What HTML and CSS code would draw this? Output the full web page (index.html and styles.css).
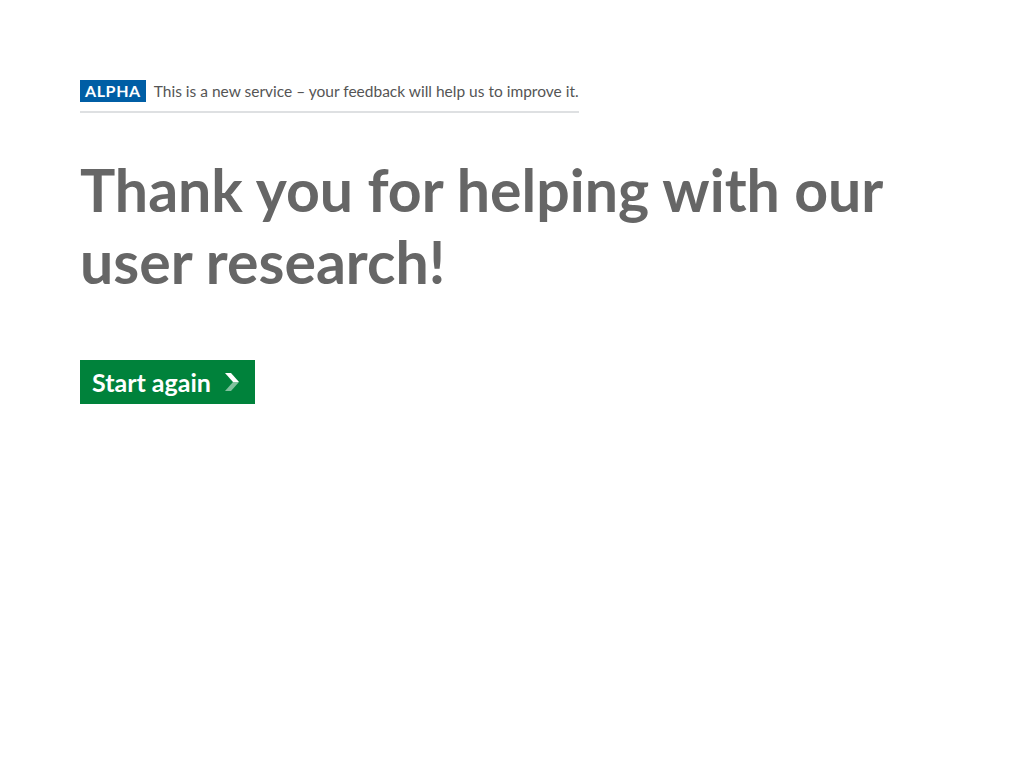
FILE: index.html
```html
<!DOCTYPE html>
<html lang="en">
<head>
<meta charset="utf-8">
<title>Thank you</title>
<link rel="stylesheet" href="styles.css">
</head>
<body>
<main class="page">
  <div class="phase-banner">
    <strong class="tag">ALPHA</strong>
    <span class="phase-text">This is a new service – your feedback will help us to improve it.</span>
  </div>
  <h1 class="heading">Thank you for helping with our user research!</h1>
  <a class="button" href="#">Start again
    <svg class="chevron" width="16" height="18" viewBox="0 0 16 18" aria-hidden="true">
      <polygon points="1,0 7,0 15,9 9,9" fill="#ffffff"/>
      <polygon points="9,9 15,9 7,18 1,18" fill="#ffffff" fill-opacity="0.5"/>
    </svg>
  </a>
</main>
</body>
</html>
```
FILE: styles.css
```css
html, body {
  margin: 0;
  padding: 0;
  background: #ffffff;
}
body {
  font-family: Lato, "Noto Sans", sans-serif;
  color: #666666;
}
.page {
  padding: 80px 80px 0 80px;
}
.phase-banner {
  display: inline-flex;
  align-items: center;
  gap: 8px;
  padding-bottom: 9px;
  border-bottom: 2px solid #dee0e2;
}
.tag {
  background: #005ea5;
  color: #ffffff;
  font-weight: 700;
  font-size: 16px;
  letter-spacing: 0.6px;
  line-height: 22px;
  padding: 0 5px;
}
.phase-text {
  font-size: 15.5px;
  color: #555555;
  line-height: 22px;
}
.heading {
  margin: 41px 0 62px 0;
  font-size: 59px;
  line-height: 72px;
  font-weight: 700;
  color: #666666;
  max-width: 840px;
}
.button {
  display: inline-flex;
  align-items: center;
  gap: 13px;
  background: #00823b;
  color: #ffffff;
  text-decoration: none;
  font-weight: 700;
  font-size: 25px;
  line-height: 44px;
  height: 44px;
  padding: 0 15px 0 12px;
  box-shadow: 0 2px 0 #003618;
}
.chevron {
  display: block;
}
```
